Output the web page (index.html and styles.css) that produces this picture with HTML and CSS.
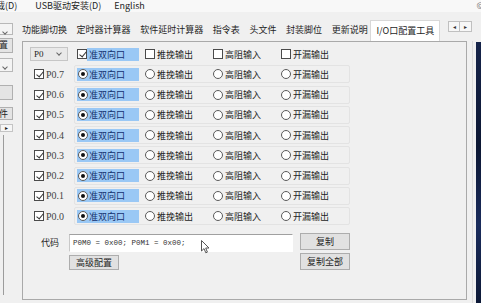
FILE: index.html
```html
<!DOCTYPE html>
<html lang="zh-CN">
<head>
    <meta charset="UTF-8">
    <title>I/O口配置工具</title>
    <link rel="stylesheet" href="styles.css">
</head>
<body>

<div class="menubar">
    <span class="menu first">载(D)</span>
    <span class="menu">USB驱动安装(D)</span>
    <span class="menu">English</span>
    <span class="corner">©</span>
</div>

<div class="main">
    <div class="sidebar">
        <div class="side-combo s1"><i class="chev"></i></div>
        <div class="side-btn s2">置</div>
        <div class="side-combo s3"><i class="chev"></i></div>
        <div class="side-btn s4"></div>
        <div class="side-btn s5">件</div>
        <div class="side-arrow">▸</div>
        <div class="side-list"></div>
    </div>

    <div class="tabs">
        <div class="tabbar">
            <span class="tab">功能脚切换</span>
            <span class="tab">定时器计算器</span>
            <span class="tab">软件延时计算器</span>
            <span class="tab">指令表</span>
            <span class="tab">头文件</span>
            <span class="tab">封装脚位</span>
            <span class="tab">更新说明</span>
            <span class="tab active">I/O口配置工具</span>
            <span class="tab-arrows"><span>◂</span><span>▸</span></span>
        </div>

        <div class="panel">
            <div class="row">
                <div class="lead"><div class="combo">P0<i class="chev"></i></div></div>
                <div class="group plain">
                    <span class="opt"><i class="box on"></i><span class="hl">准双向口</span></span>
                    <span class="opt"><i class="box"></i>推挽输出</span>
                    <span class="opt"><i class="box"></i>高阻输入</span>
                    <span class="opt"><i class="box"></i>开漏输出</span>
                </div>
            </div>

            <div class="row">
                <div class="lead"><i class="box on"></i><span class="pin">P0.7</span></div>
                <div class="group">
                    <span class="opt"><span class="hl wide"><i class="radio on"></i>准双向口</span></span>
                    <span class="opt"><i class="radio"></i>推挽输出</span>
                    <span class="opt"><i class="radio"></i>高阻输入</span>
                    <span class="opt"><i class="radio"></i>开漏输出</span>
                </div>
            </div>
            <div class="row">
                <div class="lead"><i class="box on"></i><span class="pin">P0.6</span></div>
                <div class="group">
                    <span class="opt"><span class="hl wide"><i class="radio on"></i>准双向口</span></span>
                    <span class="opt"><i class="radio"></i>推挽输出</span>
                    <span class="opt"><i class="radio"></i>高阻输入</span>
                    <span class="opt"><i class="radio"></i>开漏输出</span>
                </div>
            </div>
            <div class="row">
                <div class="lead"><i class="box on"></i><span class="pin">P0.5</span></div>
                <div class="group">
                    <span class="opt"><span class="hl wide"><i class="radio on"></i>准双向口</span></span>
                    <span class="opt"><i class="radio"></i>推挽输出</span>
                    <span class="opt"><i class="radio"></i>高阻输入</span>
                    <span class="opt"><i class="radio"></i>开漏输出</span>
                </div>
            </div>
            <div class="row">
                <div class="lead"><i class="box on"></i><span class="pin">P0.4</span></div>
                <div class="group">
                    <span class="opt"><span class="hl wide"><i class="radio on"></i>准双向口</span></span>
                    <span class="opt"><i class="radio"></i>推挽输出</span>
                    <span class="opt"><i class="radio"></i>高阻输入</span>
                    <span class="opt"><i class="radio"></i>开漏输出</span>
                </div>
            </div>
            <div class="row">
                <div class="lead"><i class="box on"></i><span class="pin">P0.3</span></div>
                <div class="group">
                    <span class="opt"><span class="hl wide"><i class="radio on"></i>准双向口</span></span>
                    <span class="opt"><i class="radio"></i>推挽输出</span>
                    <span class="opt"><i class="radio"></i>高阻输入</span>
                    <span class="opt"><i class="radio"></i>开漏输出</span>
                </div>
            </div>
            <div class="row">
                <div class="lead"><i class="box on"></i><span class="pin">P0.2</span></div>
                <div class="group">
                    <span class="opt"><span class="hl wide"><i class="radio on"></i>准双向口</span></span>
                    <span class="opt"><i class="radio"></i>推挽输出</span>
                    <span class="opt"><i class="radio"></i>高阻输入</span>
                    <span class="opt"><i class="radio"></i>开漏输出</span>
                </div>
            </div>
            <div class="row">
                <div class="lead"><i class="box on"></i><span class="pin">P0.1</span></div>
                <div class="group">
                    <span class="opt"><span class="hl wide"><i class="radio on"></i>准双向口</span></span>
                    <span class="opt"><i class="radio"></i>推挽输出</span>
                    <span class="opt"><i class="radio"></i>高阻输入</span>
                    <span class="opt"><i class="radio"></i>开漏输出</span>
                </div>
            </div>
            <div class="row">
                <div class="lead"><i class="box on"></i><span class="pin">P0.0</span></div>
                <div class="group">
                    <span class="opt"><span class="hl wide"><i class="radio on"></i>准双向口</span></span>
                    <span class="opt"><i class="radio"></i>推挽输出</span>
                    <span class="opt"><i class="radio"></i>高阻输入</span>
                    <span class="opt"><i class="radio"></i>开漏输出</span>
                </div>
            </div>

            <div class="code">
                <div class="code-left">
                    <span class="code-label">代码</span>
                    <div class="code-input">P0M0 = 0x00; P0M1 = 0x00;</div>
                    <span class="btn adv">高级配置</span>
                </div>
                <div class="code-right">
                    <span class="btn">复制</span>
                    <span class="btn">复制全部</span>
                </div>
                <svg class="cursor" width="9" height="14" viewBox="0 0 9 14">
                    <path d="M0.5 0.5 L0.5 11 L3 8.6 L4.8 12.8 L6.4 12.1 L4.7 8 L8 8 Z" fill="#fff" stroke="#555" stroke-width="1"/>
                </svg>
            </div>
        </div>
    </div>

    <div class="edge">
        <div class="edge-gap"></div>
        <div class="edge-dark"></div>
    </div>
</div>

</body>
</html>
```

FILE: styles.css
```css
* {
    box-sizing: border-box;
}
body {
    margin: 0;
    width: 481px;
    height: 303px;
    overflow: hidden;
    background: #f0f0f0;
    font-family: "Noto Sans CJK SC", sans-serif;
    font-size: 9px;
    color: #1e1e1e;
}
.menubar {
    height: 12px;
    display: flex;
    align-items: center;
    line-height: 12px;
    white-space: nowrap;
    background: #f8f8f8;
    overflow: hidden;
}
.menu {
    margin-right: 13px;
}
.menu.first {
    margin-left: -4px;
    margin-right: 18px;
}
.corner {
    margin-left: auto;
    margin-right: -3px;
    color: #777;
}
.main {
    display: flex;
    height: 291px;
}

/* left strip (cut off) */
.sidebar {
    width: 14px;
    overflow: hidden;
    display: flex;
    flex-direction: column;
}
.side-combo, .side-btn {
    width: 30px;
    margin-left: -17px;
    border: 1px solid #b8b8b8;
    text-align: right;
    padding-right: 4px;
    position: relative;
}
.side-combo {
    background: #f4f4f4;
}
.side-btn {
    background: #e4e4e4;
    border-color: #b0b0b0;
    line-height: 12px;
}
.s1 { margin-top: 11px; height: 12px; }
.s2 { margin-top: 3px; height: 15px; }
.s3 { margin-top: 5px; height: 14px; }
.s4 { margin-top: 13px; height: 15px; }
.s5 { margin-top: 7px; height: 13px; }
.side-arrow {
    margin-top: 4px;
    height: 8px;
    width: 13px;
    border: 1px solid #c4c4c4;
    background: #f6f6f6;
    font-size: 6px;
    line-height: 6px;
    text-align: center;
}
.side-list {
    margin-top: 3px;
    width: 4px;
    height: 160px;
    border-right: 1px solid #9c9c9c;
}
.chev {
    display: inline-block;
    width: 4px;
    height: 4px;
    border-right: 1px solid #666;
    border-bottom: 1px solid #666;
    transform: rotate(45deg);
}
.side-combo .chev {
    margin-top: 2px;
    margin-right: 1px;
}

/* tabs */
.tabs {
    flex: 1;
    margin-left: 4px;
    display: flex;
    flex-direction: column;
}
.tabbar {
    height: 29px;
    display: flex;
    align-items: flex-end;
    white-space: nowrap;
}
.tab {
    height: 18px;
    line-height: 14px;
    padding: 0 4.8px;
}
.tab:first-child {
    padding-left: 4px;
}
.tab.active {
    height: 21px;
    padding-top: 3px;
    background: #fff;
    border: 1px solid #d8d8d8;
    border-bottom: none;
    margin-left: -2px;
    padding-left: 5px;
    padding-right: 5px;
}
.tab-arrows {
    margin-left: auto;
    margin-right: 0;
    margin-bottom: 9px;
    display: flex;
}
.tab-arrows span {
    width: 12px;
    height: 11px;
    border: 1px solid #c0c0c0;
    background: #f7f7f7;
    font-size: 6px;
    line-height: 9px;
    text-align: center;
    color: #333;
}
.tab-arrows span + span {
    border-left: none;
}
.panel {
    flex: 1;
    margin: 0 5px 3px 4px;
    border: 1px solid #a9a9a9;
    background: #f0f0f0;
    padding: 2px 0 0 7px;
}

/* rows */
.row {
    display: flex;
    align-items: center;
    height: 20.25px;
}
.lead {
    width: 44px;
    display: flex;
    align-items: center;
    padding-left: 4px;
}
.lead .pin {
    font-family: "Liberation Serif", serif;
    font-size: 10px;
    color: #444;
}
.combo {
    width: 38px;
    height: 14px;
    margin-left: -4px;
    border: 1px solid #c6c6c6;
    background: #e9e9e9;
    font-family: "Liberation Serif", serif;
    font-size: 9px;
    line-height: 12px;
    padding-left: 3px;
    display: flex;
    align-items: center;
    justify-content: space-between;
    padding-right: 6px;
}
.combo .chev {
    margin-top: -3px;
}
.group {
    width: 276px;
    height: 18px;
    display: flex;
    align-items: center;
    padding-left: 2px;
    border: 1px solid #e3e3e3;
    border-radius: 2px;
}
.group.plain {
    border-color: transparent;
}
.opt {
    width: 68px;
    height: 13px;
    display: flex;
    align-items: center;
}
.box, .radio {
    width: 10px;
    height: 10px;
    margin-right: 2px;
    background: #fff;
    border: 1px solid #4a4a4a;
    position: relative;
    flex-shrink: 0;
}
.box.on::after {
    content: "";
    position: absolute;
    left: 3px;
    top: 0px;
    width: 3px;
    height: 6px;
    border-right: 1.3px solid #333;
    border-bottom: 1.3px solid #333;
    transform: rotate(40deg);
}
.radio {
    border-radius: 50%;
    border-color: #5a5a5a;
}
.radio.on::after {
    content: "";
    position: absolute;
    left: 2px;
    top: 2px;
    width: 4px;
    height: 4px;
    border-radius: 50%;
    background: #111;
}
.hl {
    height: 13px;
    line-height: 13px;
    width: 52px;
    padding-left: 2px;
    background: #9ac8f5;
    color: #13306e;
    display: flex;
    align-items: center;
}
.opt .box + .hl {
    margin-left: -2px;
}
.hl.wide {
    width: 62px;
    padding-left: 1px;
}
.hl.wide .radio {
    margin-right: 1px;
}

/* code area */
.code {
    display: flex;
    margin-top: 8px;
    position: relative;
}
.code-left {
    display: grid;
    grid-template-columns: 39px 224px;
    row-gap: 3px;
}
.code-label {
    text-align: right;
    padding-right: 10px;
    line-height: 18px;
}
.code-input {
    height: 18px;
    background: #fff;
    border: 1px solid #fff;
    border-top-color: #a0a0a0;
    border-left-color: #c8c8c8;
    font-family: "Liberation Mono", monospace;
    font-size: 7.5px;
    line-height: 16px;
    padding-left: 3px;
    color: #333;
}
.btn {
    width: 50px;
    height: 17px;
    line-height: 15px;
    text-align: center;
    background: #e1e1e1;
    border: 1px solid #adadad;
    display: block;
}
.btn.adv {
    grid-column: 2;
    height: 15px;
    line-height: 13px;
}
.code-right {
    margin-left: 7px;
    margin-top: -1px;
    display: flex;
    flex-direction: column;
    gap: 3px;
}
.cursor {
    position: absolute;
    left: 171px;
    top: 6px;
}

/* window edge on the right */
.edge {
    width: 9px;
    display: flex;
}
.edge-gap {
    width: 4px;
    border-left: 1px solid #dcdcdc;
    margin-top: 29px;
}
.edge-dark {
    flex: 1;
    margin-top: 30px;
    background: linear-gradient(180deg, #16244a 0%, #0c1733 40%, #1a2c5c 70%, #0d1936 100%);
}
```
